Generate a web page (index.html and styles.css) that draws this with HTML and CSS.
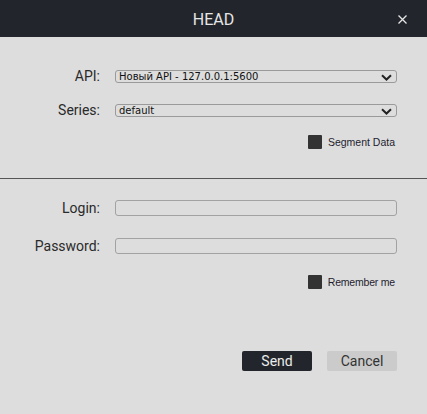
FILE: index.html
```html
<!DOCTYPE html>
<html>
<head>
<meta charset="utf-8">
<link rel="stylesheet" href="styles.css">
</head>
<body>
<div class="dialog">
  <header class="titlebar">
    <span class="title">HEAD</span>
    <span class="close">
      <svg width="9" height="9" viewBox="0 0 9 9"><path d="M0.5 0.5 L8.5 8.5 M8.5 0.5 L0.5 8.5" stroke="#e6e6e6" stroke-width="1.3" fill="none"/></svg>
    </span>
  </header>
  <section class="section top">
    <div class="row">
      <label class="label">API:</label>
      <div class="select"><span>Новый API - 127.0.0.1:5600</span><svg class="chev" width="11" height="7" viewBox="0 0 11 7"><path d="M1 1.2 L5.5 5.5 L10 1.2" stroke="#222" stroke-width="2" fill="none"/></svg></div>
    </div>
    <div class="row">
      <label class="label">Series:</label>
      <div class="select"><span>default</span><svg class="chev" width="11" height="7" viewBox="0 0 11 7"><path d="M1 1.2 L5.5 5.5 L10 1.2" stroke="#222" stroke-width="2" fill="none"/></svg></div>
    </div>
    <div class="check-row seg">
      <span class="box"></span><span class="check-text">Segment Data</span>
    </div>
  </section>
  <hr class="divider">
  <section class="section bottom">
    <div class="row login">
      <label class="label">Login:</label>
      <div class="input"></div>
    </div>
    <div class="row pw">
      <label class="label">Password:</label>
      <div class="input"></div>
    </div>
    <div class="check-row rem">
      <span class="box"></span><span class="check-text">Remember me</span>
    </div>
    <div class="buttons">
      <button class="btn send">Send</button>
      <button class="btn cancel">Cancel</button>
    </div>
  </section>
</div>
</body>
</html>
```

FILE: styles.css
```css
html, body {
  margin: 0;
  padding: 0;
  background: #dddddd;
}
.dialog {
  width: 427px;
  height: 414px;
  background: #dddddd;
  font-family: Roboto, "Liberation Sans", sans-serif;
}
.titlebar {
  height: 37px;
  background: #22252b;
  display: flex;
  align-items: center;
  justify-content: center;
  position: relative;
}
.title {
  color: #e6e6e6;
  font-size: 16px;
  padding-top: 1px;
}
.close {
  position: absolute;
  right: 20px;
  top: 15px;
  display: flex;
}
.section {
  padding-right: 30px;
}
.section.top {
  padding-top: 29px;
}
.row {
  display: flex;
  align-items: center;
  height: 20px;
  margin-bottom: 14px;
}
.row.login {
  margin-bottom: 18px;
}
.row.pw {
  margin-bottom: 16px;
}
.label {
  width: 100px;
  text-align: right;
  font-size: 14px;
  color: #2a2a2a;
  margin-right: 15px;
}
.select {
  flex: 1;
  height: 11px;
  border: 1px solid #9a9a9a;
  border-radius: 3px;
  display: flex;
  align-items: center;
  justify-content: space-between;
  padding: 0 4px 0 3px;
  font-family: "DejaVu Sans", "Liberation Sans", sans-serif;
  font-size: 10px;
  color: #111;
}
.chev {
  margin-top: 3px;
}
.check-row {
  display: flex;
  align-items: center;
  justify-content: flex-end;
  height: 20px;
  margin-right: 2px;
}
.check-row.seg {
  margin-top: -2px;
}
.box {
  width: 14px;
  height: 14px;
  background: #333333;
  border-radius: 1px;
  margin-right: 6px;
}
.check-text {
  font-family: "Liberation Sans", "DejaVu Sans", sans-serif;
  font-size: 10.5px;
  color: #1e1e30;
}
.rem .check-text {
  letter-spacing: -0.2px;
}
.divider {
  margin: 26px 0 0 0;
  border: 0;
  border-top: 1px solid #555;
  height: 0;
}
.section.bottom {
  padding-top: 19px;
}
.input {
  flex: 1;
  height: 14px;
  border: 1px solid #a2a2a2;
  border-radius: 3px;
}
.buttons {
  display: flex;
  justify-content: flex-end;
  gap: 15px;
  margin-top: 59px;
}
.btn {
  width: 70px;
  height: 20px;
  border: 0;
  border-radius: 2px;
  font-family: Roboto, "Liberation Sans", sans-serif;
  font-size: 14px;
  padding: 0;
}
.send {
  background: #22252b;
  color: #ececec;
}
.cancel {
  background: #cbcbcb;
  color: #333;
}
```
